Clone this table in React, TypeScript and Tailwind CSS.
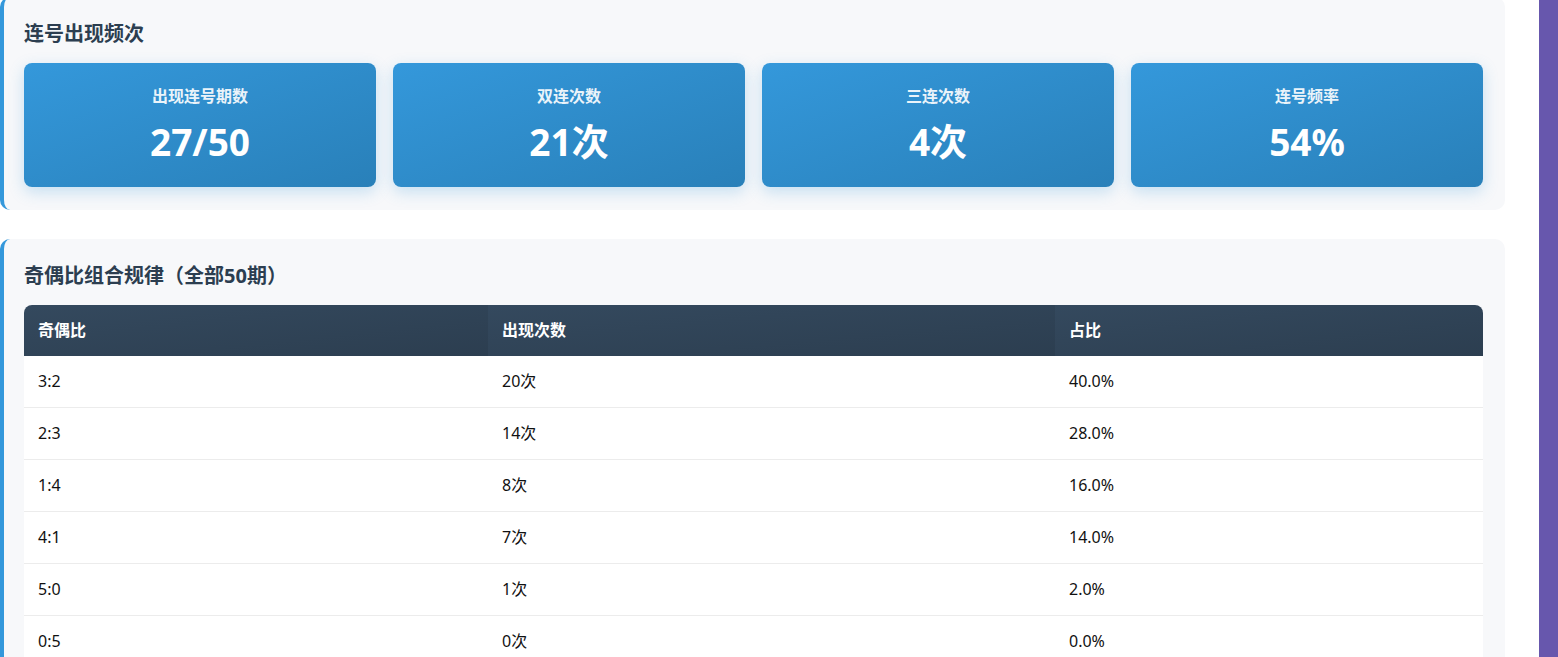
const stats = [
  { label: '出现连号期数', value: '27/50' },
  { label: '双连次数', value: '21次' },
  { label: '三连次数', value: '4次' },
  { label: '连号频率', value: '54%' },
]

const rows = [
  ['3:2', '20次', '40.0%'],
  ['2:3', '14次', '28.0%'],
  ['1:4', '8次', '16.0%'],
  ['4:1', '7次', '14.0%'],
  ['5:0', '1次', '2.0%'],
  ['0:5', '0次', '0.0%'],
]

const font = { fontFamily: '"Segoe UI", "Noto Sans", "Noto Sans CJK SC", sans-serif' }

function Section({ title, className = '', children }: { title: string; className?: string; children: React.ReactNode }) {
  return (
    <section className={`w-[1505px] rounded-[10px] border-l-4 border-[#3498db] bg-[#f7f8fa] px-5 pt-[22px] pb-[23px] ${className}`}>
      <h3 className="mb-[14px] text-[20px] leading-[30px] font-bold text-[#2c3e50]">{title}</h3>
      {children}
    </section>
  )
}

export default function App() {
  return (
    <div className="flex h-[657px] overflow-hidden bg-white" style={font}>
      <main className="w-[1539px] shrink-0">
        <Section title="连号出现频次" className="-mt-[3px]">
          <div className="grid grid-cols-4 gap-[17px] pr-[2px]">
            {stats.map((s) => (
              <div
                key={s.label}
                className="flex h-[124px] flex-col items-center rounded-lg bg-gradient-to-br from-[#3498db] to-[#2980b9] pt-[22px] text-white shadow-[0_5px_15px_rgba(52,152,219,0.25)]"
              >
                <div className="text-[16px] leading-[22px] font-semibold opacity-90">{s.label}</div>
                <div className="mt-[10px] text-[37px] leading-[50px] font-bold">{s.value}</div>
              </div>
            ))}
          </div>
        </Section>

        <Section title="奇偶比组合规律（全部50期）" className="mt-[29px]">
          <div className="mr-[2px] overflow-hidden rounded-t-lg bg-white">
            <table className="w-full border-collapse text-left text-[16px] leading-[21px]">
              <thead>
                <tr className="text-white">
                  <th className="w-[464px] bg-gradient-to-br from-[#34495e] to-[#2c3e50] px-[14px] py-[15px] font-bold">奇偶比</th>
                  <th className="w-[567px] bg-gradient-to-br from-[#34495e] to-[#2c3e50] px-[14px] py-[15px] font-bold">出现次数</th>
                  <th className="bg-gradient-to-br from-[#34495e] to-[#2c3e50] px-[14px] py-[15px] font-bold">占比</th>
                </tr>
              </thead>
              <tbody className="text-[#111]">
                {rows.map((r) => (
                  <tr key={r[0]} className="border-b border-[#ececec]">
                    {r.map((c, i) => (
                      <td key={i} className="px-[14px] py-[15px]">{c}</td>
                    ))}
                  </tr>
                ))}
              </tbody>
            </table>
          </div>
        </Section>
      </main>
      <div className="flex-1 bg-[#6757ad]" />
    </div>
  )
}
